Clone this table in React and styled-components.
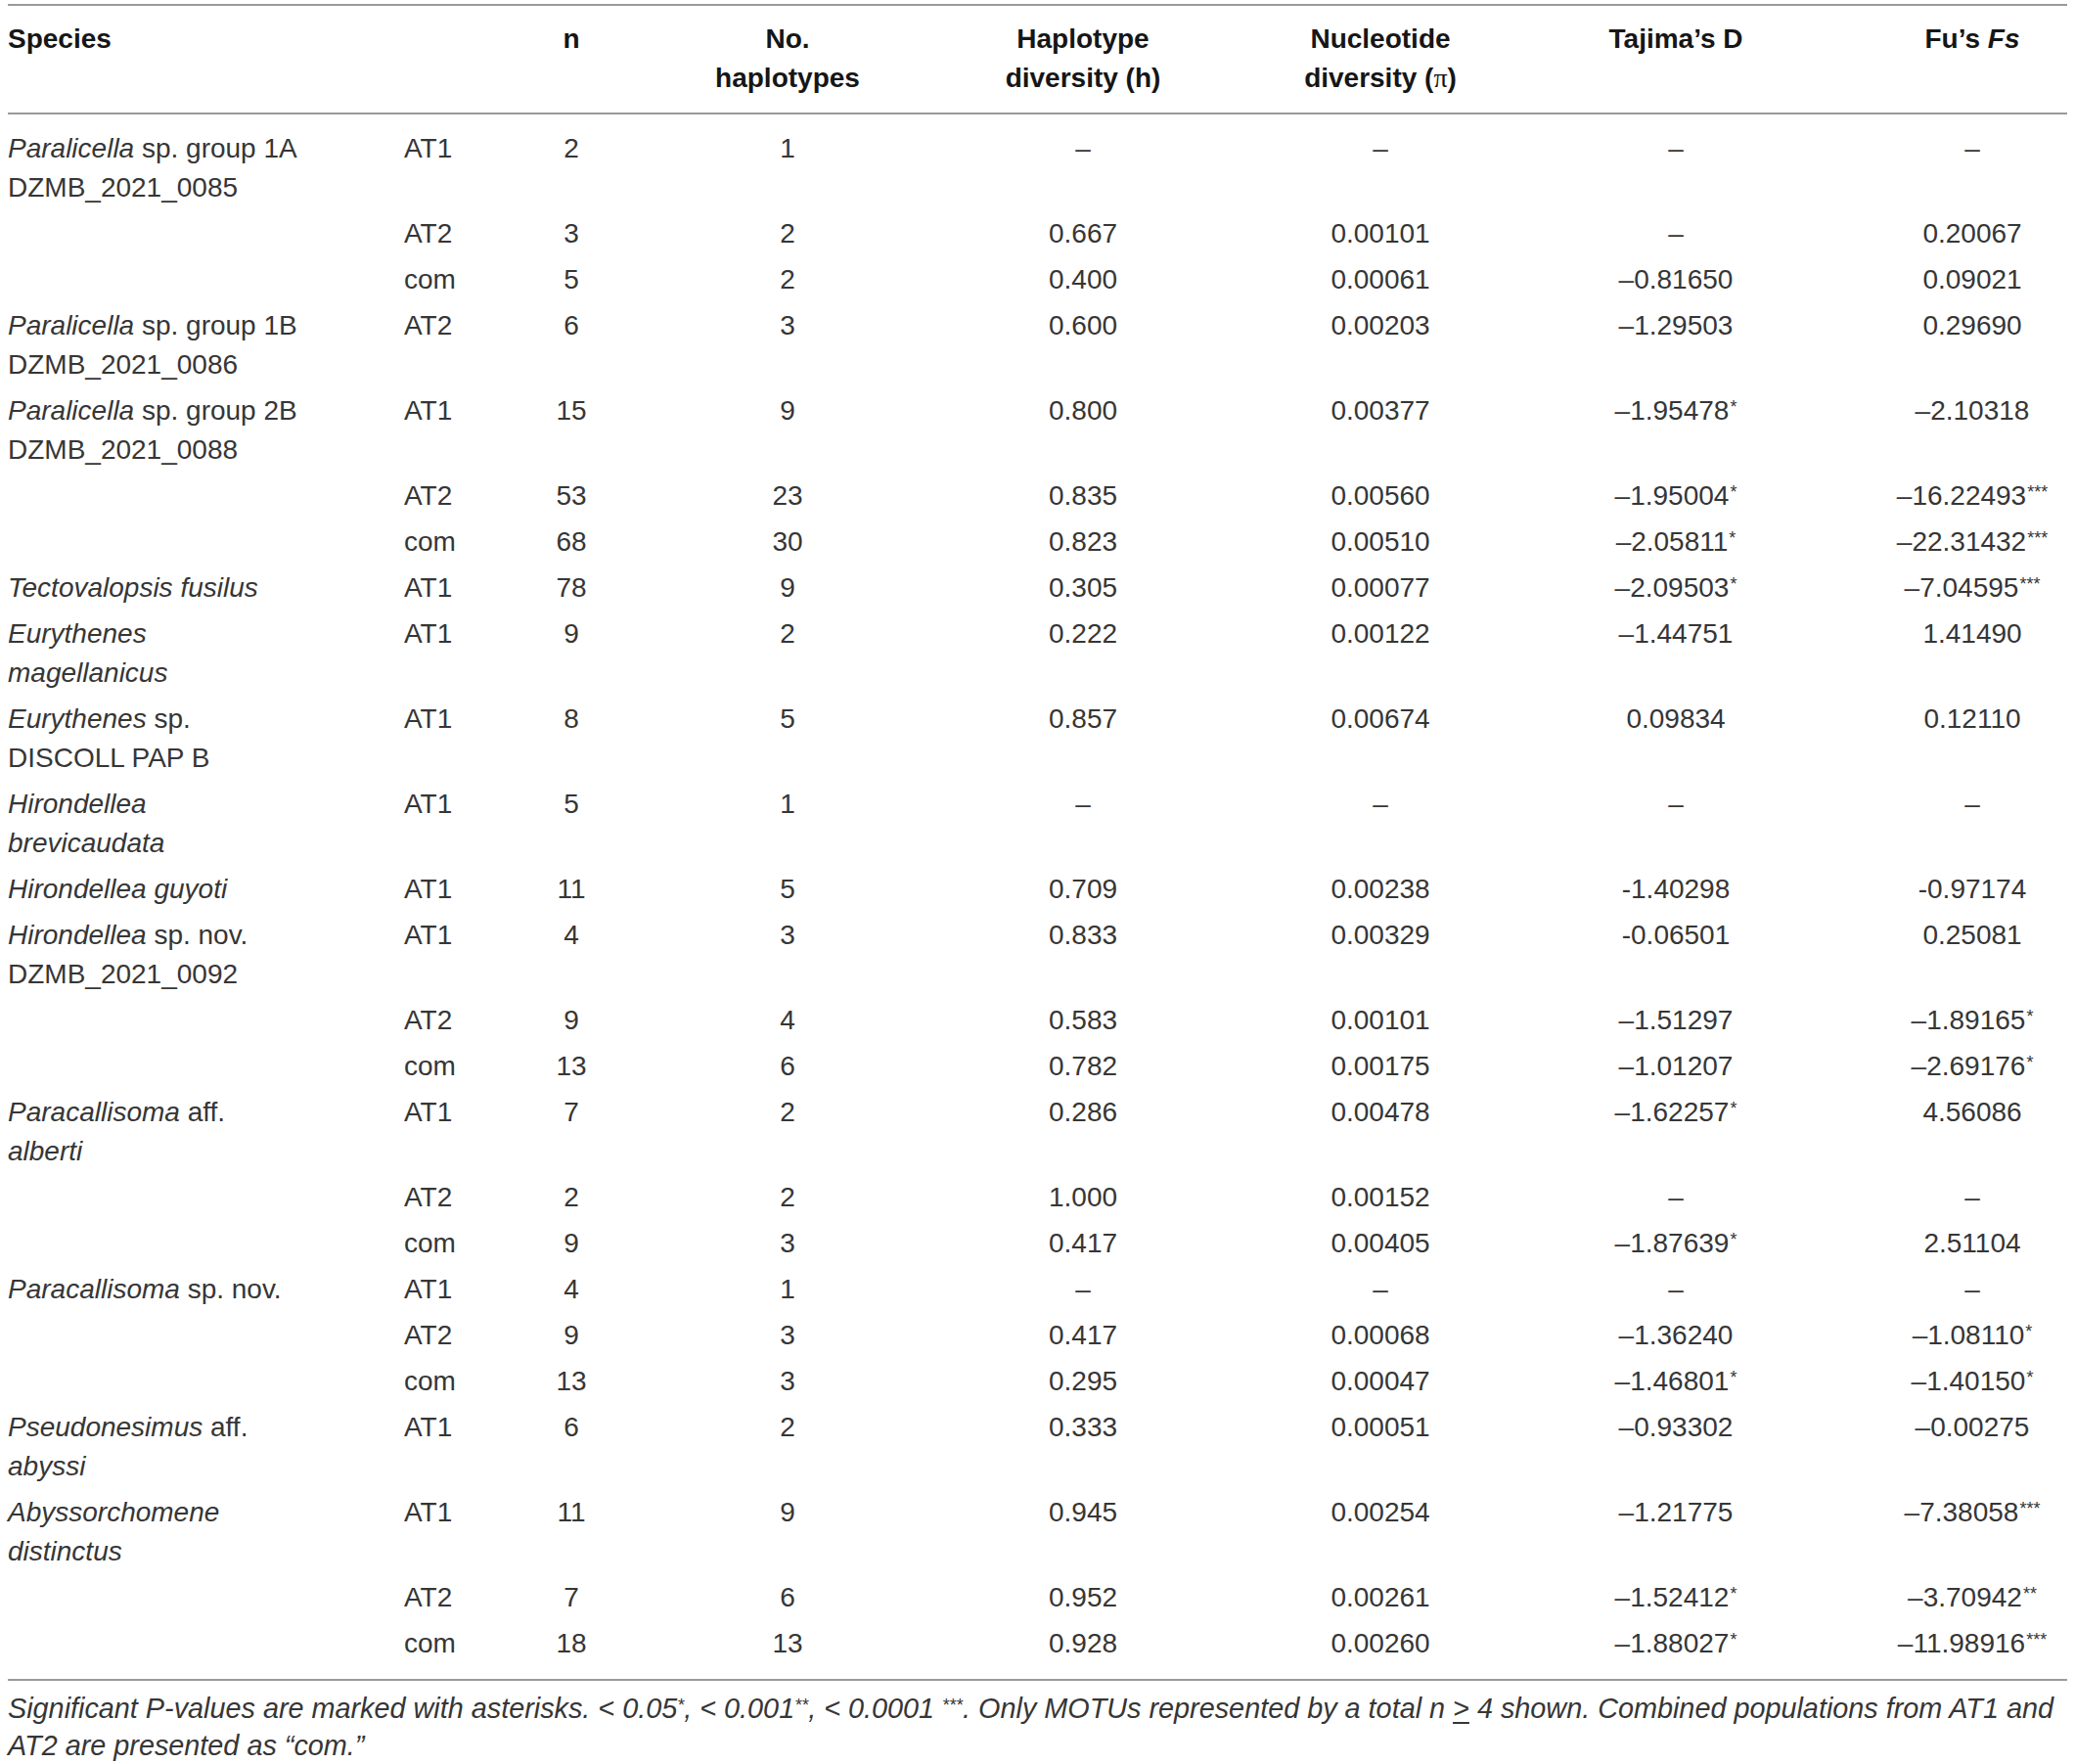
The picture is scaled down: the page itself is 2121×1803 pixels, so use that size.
import React from "react";
import styled, { createGlobalStyle } from "styled-components";

const COLS = "405px 85px 172px 270px 334px 274px 330px 235px";
const LAST_SHIFT = 41;

const Global = createGlobalStyle`
  html, body { margin: 0; padding: 0; background: #ffffff; }
  body { font-family: "Liberation Sans", Arial, Helvetica, sans-serif; }
`;

const Page = styled.div`
  padding: 4px 8px 0 8px;
  width: 2105px;
`;

const Table = styled.div`
  border-top: 2px solid #9a9a9a;
  font-size: 28px;
  line-height: 40px;
`;

const HeaderRow = styled.div`
  display: grid;
  grid-template-columns: ${COLS};
  padding: 14px 0 15px 0;
  border-bottom: 2px solid #9a9a9a;
  color: #161616;
  font-weight: 700;
`;

const HeadCell = styled.div`
  text-align: ${(p) => p.$align || "center"};
  padding-left: ${(p) => p.$shift || 0}px;
  white-space: nowrap;
`;

const Pi = styled.span`
  font-family: "Liberation Serif", "DejaVu Serif", serif;
  font-weight: 400;
`;

const Body = styled.div`
  padding: 11.5px 0 12px 0;
  border-bottom: 2px solid #9a9a9a;
  color: #363636;
`;

const Row = styled.div`
  display: grid;
  grid-template-columns: ${COLS};
  padding: 3.5px 0;
`;

const Cell = styled.div`
  text-align: ${(p) => p.$align || "center"};
  padding-left: ${(p) => p.$shift || 0}px;
  white-space: nowrap;
`;

const Line = styled.span`
  display: block;
`;

const Star = styled.sup`
  font-size: 18px;
  line-height: 0;
  vertical-align: 7px;
  margin-left: ${(p) => (p.$tight ? 0 : 1)}px;
`;

const Foot = styled.p`
  margin: 0;
  padding-top: 9px;
  font-size: 28.8px;
  line-height: 38px;
  font-style: italic;
  color: #363636;
`;

const Under = styled.span`
  text-decoration: underline;
  text-underline-offset: 4px;
  text-decoration-thickness: 1.5px;
`;

const rows = [
  [["*Paralicella* sp. group 1A", "DZMB_2021_0085"], "AT1", "2", "1", "–", "–", "–", "–"],
  [null, "AT2", "3", "2", "0.667", "0.00101", "–", "0.20067"],
  [null, "com", "5", "2", "0.400", "0.00061", "–0.81650", "0.09021"],
  [["*Paralicella* sp. group 1B", "DZMB_2021_0086"], "AT2", "6", "3", "0.600", "0.00203", "–1.29503", "0.29690"],
  [["*Paralicella* sp. group 2B", "DZMB_2021_0088"], "AT1", "15", "9", "0.800", "0.00377", "–1.95478*", "–2.10318"],
  [null, "AT2", "53", "23", "0.835", "0.00560", "–1.95004*", "–16.22493***"],
  [null, "com", "68", "30", "0.823", "0.00510", "–2.05811*", "–22.31432***"],
  [["*Tectovalopsis fusilus*"], "AT1", "78", "9", "0.305", "0.00077", "–2.09503*", "–7.04595***"],
  [["*Eurythenes*", "*magellanicus*"], "AT1", "9", "2", "0.222", "0.00122", "–1.44751", "1.41490"],
  [["*Eurythenes* sp.", "DISCOLL PAP B"], "AT1", "8", "5", "0.857", "0.00674", "0.09834", "0.12110"],
  [["*Hirondellea*", "*brevicaudata*"], "AT1", "5", "1", "–", "–", "–", "–"],
  [["*Hirondellea guyoti*"], "AT1", "11", "5", "0.709", "0.00238", "-1.40298", "-0.97174"],
  [["*Hirondellea* sp. nov.", "DZMB_2021_0092"], "AT1", "4", "3", "0.833", "0.00329", "-0.06501", "0.25081"],
  [null, "AT2", "9", "4", "0.583", "0.00101", "–1.51297", "–1.89165*"],
  [null, "com", "13", "6", "0.782", "0.00175", "–1.01207", "–2.69176*"],
  [["*Paracallisoma* aff.", "*alberti*"], "AT1", "7", "2", "0.286", "0.00478", "–1.62257*", "4.56086"],
  [null, "AT2", "2", "2", "1.000", "0.00152", "–", "–"],
  [null, "com", "9", "3", "0.417", "0.00405", "–1.87639*", "2.51104"],
  [["*Paracallisoma* sp. nov."], "AT1", "4", "1", "–", "–", "–", "–"],
  [null, "AT2", "9", "3", "0.417", "0.00068", "–1.36240", "–1.08110*"],
  [null, "com", "13", "3", "0.295", "0.00047", "–1.46801*", "–1.40150*"],
  [["*Pseudonesimus* aff.", "*abyssi*"], "AT1", "6", "2", "0.333", "0.00051", "–0.93302", "–0.00275"],
  [["*Abyssorchomene*", "*distinctus*"], "AT1", "11", "9", "0.945", "0.00254", "–1.21775", "–7.38058***"],
  [null, "AT2", "7", "6", "0.952", "0.00261", "–1.52412*", "–3.70942**"],
  [null, "com", "18", "13", "0.928", "0.00260", "–1.88027*", "–11.98916***"],
];

function Marked({ text }) {
  const parts = text.split("*");
  return parts.map((p, i) => (i % 2 === 1 ? <i key={i}>{p}</i> : <React.Fragment key={i}>{p}</React.Fragment>));
}

function Value({ v }) {
  const m = v.match(/^(.*?)(\*+)$/);
  if (!m) return v;
  return (
    <>
      {m[1]}
      <Star>{m[2]}</Star>
    </>
  );
}

export default function App() {
  return (
    <>
      <Global />
      <Page>
        <Table>
          <HeaderRow>
            <HeadCell $align="left">Species</HeadCell>
            <HeadCell $align="left"></HeadCell>
            <HeadCell>n</HeadCell>
            <HeadCell>
              <Line>No.</Line>
              <Line>haplotypes</Line>
            </HeadCell>
            <HeadCell>
              <Line>Haplotype</Line>
              <Line>diversity (h)</Line>
            </HeadCell>
            <HeadCell>
              <Line>Nucleotide</Line>
              <Line>
                diversity (<Pi>π</Pi>)
              </Line>
            </HeadCell>
            <HeadCell>Tajima’s D</HeadCell>
            <HeadCell $shift={LAST_SHIFT}>
              Fu’s <i>Fs</i>
            </HeadCell>
          </HeaderRow>
          <Body>
            {rows.map((r, idx) => (
              <Row key={idx}>
                <Cell $align="left">
                  {r[0] &&
                    r[0].map((ln, j) => (
                      <Line key={j}>
                        <Marked text={ln} />
                      </Line>
                    ))}
                </Cell>
                <Cell $align="left">{r[1]}</Cell>
                <Cell>{r[2]}</Cell>
                <Cell>{r[3]}</Cell>
                <Cell>{r[4]}</Cell>
                <Cell>{r[5]}</Cell>
                <Cell>
                  <Value v={r[6]} />
                </Cell>
                <Cell $shift={LAST_SHIFT}>
                  <Value v={r[7]} />
                </Cell>
              </Row>
            ))}
          </Body>
          <Foot>
            Significant P-values are marked with asterisks. &lt; 0.05<Star $tight>*</Star>, &lt; 0.001<Star $tight>**</Star>, &lt; 0.0001{" "}
            <Star $tight>***</Star>. Only MOTUs represented by a total n <Under>&gt;</Under> 4 shown. Combined populations from AT1 and
            AT2 are presented as “com.”
          </Foot>
        </Table>
      </Page>
    </>
  );
}
